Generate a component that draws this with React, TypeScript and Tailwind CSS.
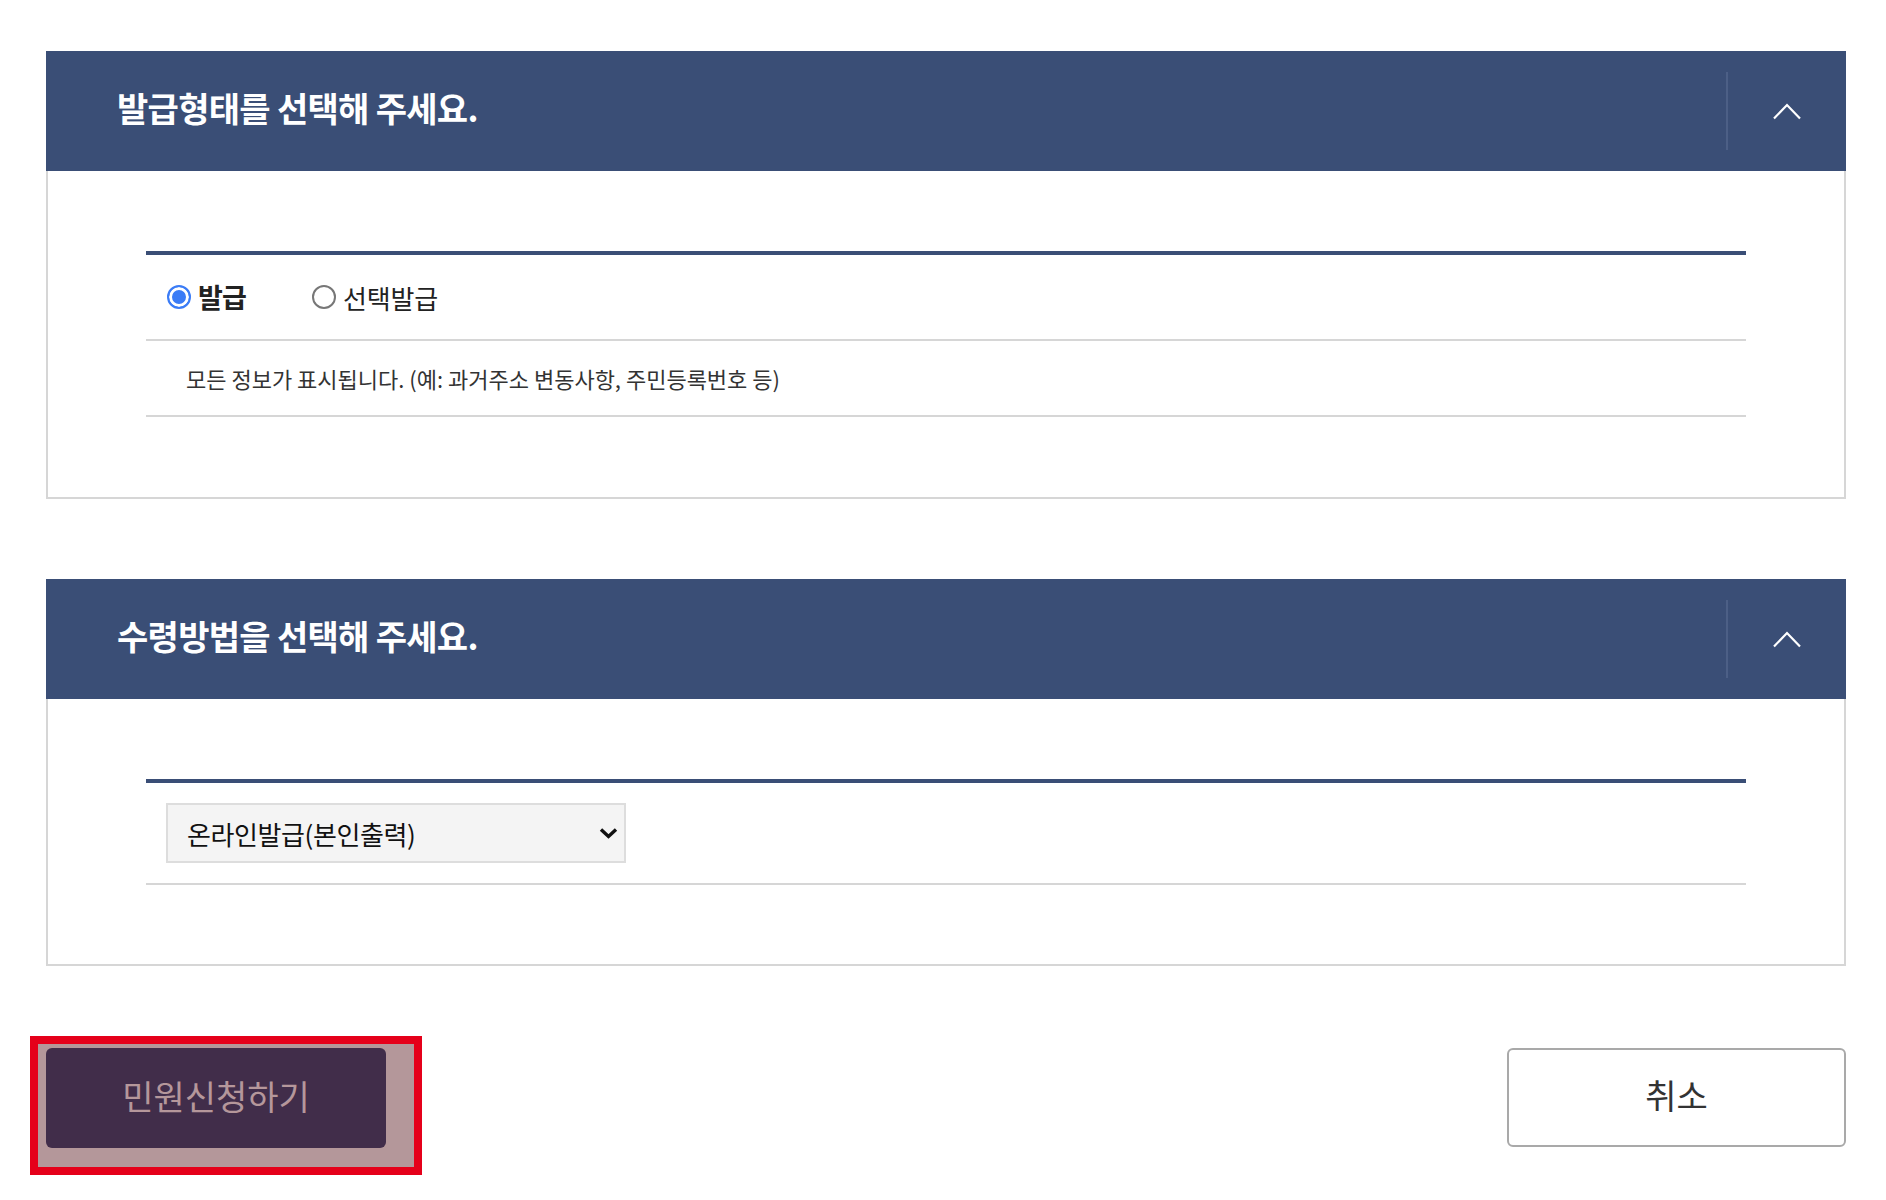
import { useState } from 'react'

const font = "font-['Noto_Sans_CJK_KR','Noto_Sans',sans-serif]"

function SectionHeader({ title }: { title: string }) {
  return (
    <div className="flex h-[120px] items-center bg-[#3a4e76]">
      <h2 className="flex-1 pb-[8px] pl-[71px] text-[34px] font-bold tracking-[-0.7px] text-white">{title}</h2>
      <div className="h-[78px] w-[2px] bg-[#4c5f86]" />
      <button type="button" className="flex h-full w-[118px] items-center justify-center" aria-label="접기">
        <svg width="30" height="18" viewBox="0 0 30 18" fill="none">
          <path d="M2 16.5 15 3l13 13.5" stroke="white" strokeWidth="2.2" />
        </svg>
      </button>
    </div>
  )
}

function Section({
  title,
  children,
  className,
  bodyClass = 'pb-[80px]',
}: {
  title: string
  children: React.ReactNode
  className?: string
  bodyClass?: string
}) {
  return (
    <section className={className}>
      <SectionHeader title={title} />
      <div className={`border-2 border-t-0 border-[#d6d6d6] px-[98px] pt-[80px] ${bodyClass}`}>
        <div className="border-t-4 border-[#3a4e76]">{children}</div>
      </div>
    </section>
  )
}

function Radio({ label, checked, onChange }: { label: string; checked: boolean; onChange: () => void }) {
  return (
    <label className="flex cursor-pointer items-center gap-[7px]">
      <input
        type="radio"
        name="issueType"
        checked={checked}
        onChange={onChange}
        className="h-6 w-6 appearance-none rounded-full border-2 border-[#777777] bg-white checked:border-[#3b7cf6] checked:bg-[#3b7cf6] checked:shadow-[inset_0_0_0_3px_white]"
      />
      <span className={checked ? 'text-[27px] font-bold tracking-[-0.8px] text-[#222]' : 'text-[26px] tracking-[-0.2px] text-[#222]'}>
        {label}
      </span>
    </label>
  )
}

export default function App() {
  const [type, setType] = useState<'all' | 'select'>('all')

  return (
    <div className={`min-h-screen bg-white ${font}`}>
      <div className="ml-[46px] w-[1800px] pt-[51px]">
        <Section title="발급형태를 선택해 주세요.">
          <div className="flex h-[86px] items-center gap-[66px] border-b-2 border-[#d6d6d6] pl-[21px]">
            <Radio label="발급" checked={type === 'all'} onChange={() => setType('all')} />
            <Radio label="선택발급" checked={type === 'select'} onChange={() => setType('select')} />
          </div>
          <div className="flex h-[76px] items-center border-b-2 border-[#d6d6d6] pl-[40px]">
            <p className="text-[22px] text-[#333]">모든 정보가 표시됩니다. (예: 과거주소 변동사항, 주민등록번호 등)</p>
          </div>
        </Section>

        <Section title="수령방법을 선택해 주세요." className="mt-[80px]" bodyClass="pb-[79px]">
          <div className="border-b-2 border-[#d6d6d6] pt-[20px] pb-[20px] pl-[20px]">
            <div className="relative w-[460px]">
              <select className="h-[60px] w-full appearance-none border-2 border-[#dddddd] bg-[#f4f4f4] pl-[19px] text-[26px] tracking-[-0.4px] text-[#111] outline-none">
                <option>온라인발급(본인출력)</option>
                <option>우편수령</option>
              </select>
              <svg className="pointer-events-none absolute top-1/2 right-[8px] -translate-y-1/2" width="19" height="12" viewBox="0 0 19 12" fill="none">
                <path d="M2 2.5l7.5 7 7.5-7" stroke="#111" strokeWidth="3.4" />
              </svg>
            </div>
          </div>
        </Section>

        <div className="mt-[82px] flex items-start justify-between">
          <div className="relative">
            <div className="absolute -top-[12px] -left-[16px] h-[139px] w-[392px] border-8 border-[#e5001a] bg-[#b4979a]" />
            <button type="button" className="relative h-[100px] w-[340px] rounded-[6px] bg-[#412d4a] pb-[6px] text-[34px] text-[#b5979b]">
              민원신청하기
            </button>
          </div>
          <button type="button" className="h-[99px] w-[339px] rounded-[6px] border-2 border-[#a9a9a9] bg-white pb-[6px] text-[34px] text-[#333]">
            취소
          </button>
        </div>
      </div>
    </div>
  )
}
